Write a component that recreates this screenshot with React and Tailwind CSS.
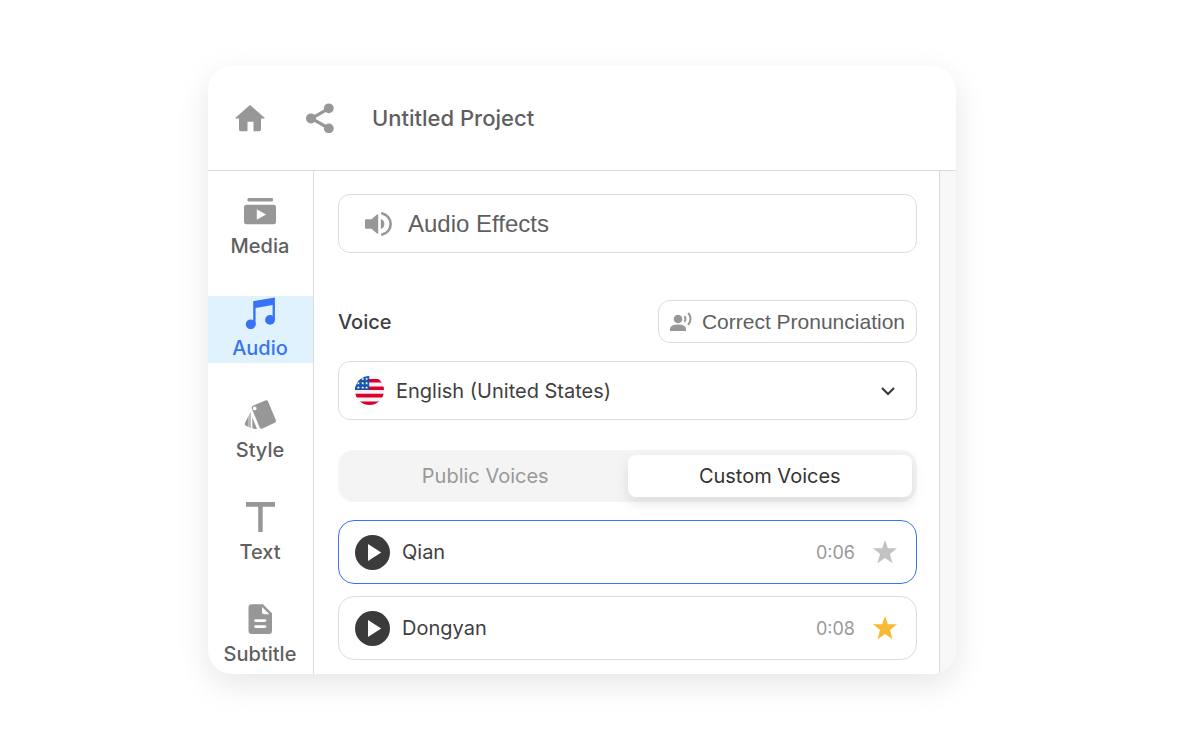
import React, { useState } from 'react';
import clsx from 'clsx';

const HomeIcon = () => (
  <svg className="w-[30px] h-[30px]" viewBox="0 0 30 30" fill="currentColor" aria-hidden="true">
    <path d="M15 2 29.3 14.600q.8 1-.4 1H26v11q0 1.6-1.6 1.6h-5.900V18.800h-6v9.400H5.600Q4 28.200 4 26.600V15.600H1.100q-1.200 0-.4-1z" />
  </svg>
);

const ShareIcon = () => (
  <svg className="w-[30px] h-[30px]" viewBox="0 0 30 30" fill="currentColor" aria-hidden="true">
    <path d="M24 5.300 6.500 15.400l17.500 10" fill="none" stroke="currentColor" strokeWidth="3.200" />
    <circle cx="23.800" cy="5.300" r="4.900" />
    <circle cx="6" cy="15.400" r="5" />
    <circle cx="23.800" cy="25.400" r="4.900" />
  </svg>
);

const MediaIcon = () => (
  <svg className="w-8 h-8" viewBox="0 0 32 32" fill="currentColor" aria-hidden="true">
    <rect x="3.500" y="3" width="25.500" height="3.400" rx="1" />
    <path
      fillRule="evenodd"
      d="M2.500 9.800h27q2.500 0 2.500 2.500v14.400q0 2.500-2.500 2.500h-27Q0 29.200 0 26.700V12.300q0-2.500 2.500-2.500zM12.800 14.300v10.500l9.200-5.250z"
    />
  </svg>
);

const AudioIcon = () => (
  <svg className="w-8 h-8" viewBox="0 0 32 32" fill="currentColor" aria-hidden="true">
    <path d="M9.200 4.200 30.900.4v22.600h-2.300V8L11.600 11v17.500H9.200z" />
    <circle cx="6.700" cy="27.300" r="4.900" />
    <circle cx="26" cy="22.900" r="4.900" />
  </svg>
);

const StyleIcon = () => (
  <svg className="w-8 h-8" viewBox="0 0 32 32" fill="currentColor" aria-hidden="true">
    <path
      fillRule="evenodd"
      d="M9 6.800 21.300 1.500q2-.7 2.900 1.200L31.800 21q.7 1.900-1.100 2.800L18.500 29.600q-2 .8-2.900-1.100L7.800 9.500Q7.200 7.700 9 6.800zM10.700 7.500a1.900 1.900 0 1 0 0 3.800 1.900 1.900 0 0 0 0-3.800z"
    />
    <path d="M4.300 17.500v10.200L2 27Q.2 26.100.9 24.100z" />
    <path d="M4.300 17.500 6.900 12.500v16.800l-2.600-1.600z" fillOpacity=".7" />
    <path d="M8.300 18.500 13 29.900h-2.200q-2.500 0-2.500-2.500z" />
  </svg>
);

const TextIcon = () => (
  <svg className="w-8 h-8" viewBox="0 0 32 32" fill="currentColor" aria-hidden="true">
    <path d="M2 1h29v4.700H18.700V31h-4.500V5.700H2z" />
  </svg>
);

const SubtitleIcon = () => (
  <svg className="w-8 h-8" viewBox="0 0 32 32" fill="currentColor" aria-hidden="true">
    <path
      fillRule="evenodd"
      d="M7.500 1.300H19L28 10.300V28q0 3-3 3H7.500q-3 0-3-3V4.300q0-3 3-3zM18 3.900v5.400q0 2 2 2h5.400zM11.600 16.200a1.400 1.400 0 0 0 0 2.800H21a1.400 1.400 0 0 0 0-2.800zM11.600 22.200a1.400 1.400 0 0 0 0 2.800H21a1.400 1.400 0 0 0 0-2.800z"
    />
  </svg>
);

const SpeakerIcon = () => (
  <svg className="w-7 h-7 text-[#979797]" viewBox="0 0 28 28" fill="currentColor" aria-hidden="true">
    <path d="M1 9.200h5.500l5.500-4.600q1.200-.8 1.200.6v17.600q0 1.400-1.200.6l-5.500-4.600H1q-1 0-1-1v-7.600q0-1 1-1zM15.800 9q3.600 1.200 3.600 5t-3.600 5.100z" />
    <path d="M17.300 3.400A10.900 10.900 0 0 1 17.300 24.600" fill="none" stroke="currentColor" strokeWidth="2.600" strokeLinecap="round" />
  </svg>
);

const VoiceOverIcon = () => (
  <svg className="w-[22px] h-[22px] text-[#979797]" viewBox="0 0 22 22" fill="currentColor" aria-hidden="true">
    <circle cx="8" cy="8" r="4.300" />
    <path d="M0 20v-2q0-4.500 8-4.500t8 4.500v2z" />
    <g fill="none" stroke="currentColor" strokeWidth="2">
      <path d="M14.500 5.200q2 2.800 0 5.600" />
      <path d="M18.200 2q4.800 5.600 0 12" />
    </g>
  </svg>
);

const UsFlag = () => (
  <svg className="w-[29px] h-[29px]" viewBox="0 0 30 30" aria-hidden="true">
    <clipPath id="flag-circle">
      <circle cx="15" cy="15" r="15" />
    </clipPath>
    <g clipPath="url(#flag-circle)">
      <rect width="30" height="30" fill="#f2f2f2" />
      <path
        d="M0 5h30M0 12.600h30M0 20.300h30M0 28.200h30"
        stroke="#d8002f"
        strokeWidth="3.700"
      />
      <rect width="14.700" height="14.400" fill="#1656b0" />
      <g fill="#fff">
        {[3, 7.500, 12].map((y) =>
          [3.500, 8, 12].map((x) => (
            <path key={`${x}-${y}`} d={`M${x} ${y - 1.500}l.5 1h1l-.8.7.3 1.100-1-.6-1 .6.3-1.100-.8-.7h1z`} />
          ))
        )}
      </g>
    </g>
  </svg>
);

const StarIcon = () => (
  <svg className="w-6 h-6" viewBox="0 0 24 24" fill="currentColor" aria-hidden="true">
    <path d="M12 0l2.900 8.200H24l-7.100 5.700 2.700 9.300L12 18.100l-7.600 5.100 2.700-9.300L0 8.200h9.100z" />
  </svg>
);

const navItems = [
  { label: 'Media', Icon: MediaIcon },
  { label: 'Audio', Icon: AudioIcon },
  { label: 'Style', Icon: StyleIcon },
  { label: 'Text', Icon: TextIcon },
  { label: 'Subtitle', Icon: SubtitleIcon },
];

const voices = [
  { name: 'Qian', length: '0:06', selected: true },
  { name: 'Dongyan', length: '0:08', favorite: true },
];

const tabs = ['Public Voices', 'Custom Voices'];

const VoiceRow = ({ name, length, selected, favorite }) => (
  <li
    className={clsx(
      'flex h-16 items-center rounded-2xl border px-4',
      selected ? 'border-[#3973f5]' : 'border-[#dcdcdc]'
    )}
  >
    <button
      type="button"
      aria-label={`Play ${name}`}
      className="flex h-[35px] w-[35px] items-center justify-center rounded-full bg-[#3b3b3b] text-white"
    >
      <svg className="h-[35px] w-[35px]" viewBox="0 0 35 35" fill="currentColor" aria-hidden="true">
        <path d="M13 9v17l13.200-8.500z" />
      </svg>
    </button>
    <span className="ml-3 flex-1 text-[20px] text-[#3f3f3f]">{name}</span>
    <span className="text-[18px] text-[#999999]">{length}</span>
    <button
      type="button"
      aria-label={`Favorite ${name}`}
      className={clsx('ml-[18px] mr-[3px]', favorite ? 'text-[#f8b933]' : 'text-[#c2c2c2]')}
    >
      <StarIcon />
    </button>
  </li>
);

const App = () => {
  const [section, setSection] = useState('Audio');
  const [tab, setTab] = useState('Custom Voices');

  return (
    <div className="min-h-screen bg-white pt-[66px] pr-[244px] pb-[66px] pl-52 font-['Liberation_Sans',Arial,sans-serif]">
      <div className="overflow-hidden rounded-3xl bg-white shadow-[0_10px_32px_rgba(0,0,0,0.10)]">
        <header className="flex h-[105px] items-center border-b border-[#dcdcdc] px-[27px] text-[#979797]">
          <button type="button" aria-label="Home">
            <HomeIcon />
          </button>
          <button type="button" aria-label="Share" className="ml-10">
            <ShareIcon />
          </button>
          <h1 className="ml-[37px] font-[Inter,sans-serif] text-[22px] font-medium text-[#5f5f5f]">Untitled Project</h1>
        </header>

        <div className="flex">
          {/* Sidebar */}
          <nav className="flex w-[106px] shrink-0 flex-col gap-[35px] border-r border-[#dcdcdc] pt-[23px] pb-[5px]">
            {navItems.map(({ label, Icon }) => (
              <button
                key={label}
                type="button"
                onClick={() => setSection(label)}
                className={clsx(
                  'flex h-[67px] flex-col items-center gap-1 pt-px pr-px font-[Inter,sans-serif] font-medium',
                  section === label ? 'bg-[#e1f2ff] text-[#3973f5]' : 'text-[#979797]'
                )}
              >
                <Icon />
                <span className={clsx('text-[20px] leading-[30px]', section === label ? 'text-[#3973f5]' : 'text-[#5f5f5f]')}>
                  {label}
                </span>
              </button>
            ))}
          </nav>

          {/* Voice settings */}
          <main className="min-w-0 flex-1 border-r border-[#d9d9d9] pt-[23px] pr-[22px] pb-[14px] pl-6">
            <button
              type="button"
              className="flex h-[59px] w-full items-center gap-[15px] rounded-xl border border-[#dcdcdc] px-[26px] text-[24px] text-[#5f5f5f]"
            >
              <SpeakerIcon />
              Audio Effects
            </button>

            <div className="mt-[47px] flex items-center justify-between">
              <label htmlFor="voice-language" className="font-[Inter,sans-serif] text-[20px] font-medium text-[#3f3f3f]">
                Voice
              </label>
              <button
                type="button"
                className="flex h-[43px] items-center gap-[10px] rounded-xl border border-[#dcdcdc] px-[11px] text-[21px] text-[#5f5f5f]"
              >
                <VoiceOverIcon />
                Correct Pronunciation
              </button>
            </div>

            <div className="relative mt-[18px] font-[Inter,sans-serif]">
              <select
                id="voice-language"
                className="h-[59px] w-full appearance-none rounded-xl border border-[#dcdcdc] bg-white pr-12 pl-[57px] text-[20px] text-[#3f3f3f]"
              >
                <option>English (United States)</option>
              </select>
              <span className="pointer-events-none absolute inset-y-0 left-[17px] flex items-center">
                <UsFlag />
              </span>
              <svg
                className="pointer-events-none absolute inset-y-0 right-[21px] my-auto h-4 w-4 text-[#3b3b3b]"
                viewBox="0 0 16 16"
                fill="none"
                stroke="currentColor"
                strokeWidth="2.200"
                aria-hidden="true"
              >
                <path d="m2 5 6 6 6-6" />
              </svg>
            </div>

            <div role="tablist" className="mt-[30px] flex rounded-2xl bg-[#f4f4f4] p-[5px] font-[Inter,sans-serif]">
              {tabs.map((name) => (
                <button
                  key={name}
                  type="button"
                  role="tab"
                  aria-selected={tab === name}
                  onClick={() => setTab(name)}
                  className={clsx(
                    'h-[42px] flex-1 rounded-lg text-[20px]',
                    tab === name ? 'bg-white text-[#333333] shadow-[0_6px_14px_rgba(0,0,0,0.10)]' : 'text-[#999999]'
                  )}
                >
                  {name}
                </button>
              ))}
            </div>

            <ul className="mt-[18px] flex flex-col gap-3 font-[Inter,sans-serif]">
              {voices.map((voice) => (
                <VoiceRow key={voice.name} {...voice} />
              ))}
            </ul>
          </main>

          <div className="w-4 shrink-0 bg-[#f8f8f8]" />
        </div>
      </div>
    </div>
  );
};

export default App;
